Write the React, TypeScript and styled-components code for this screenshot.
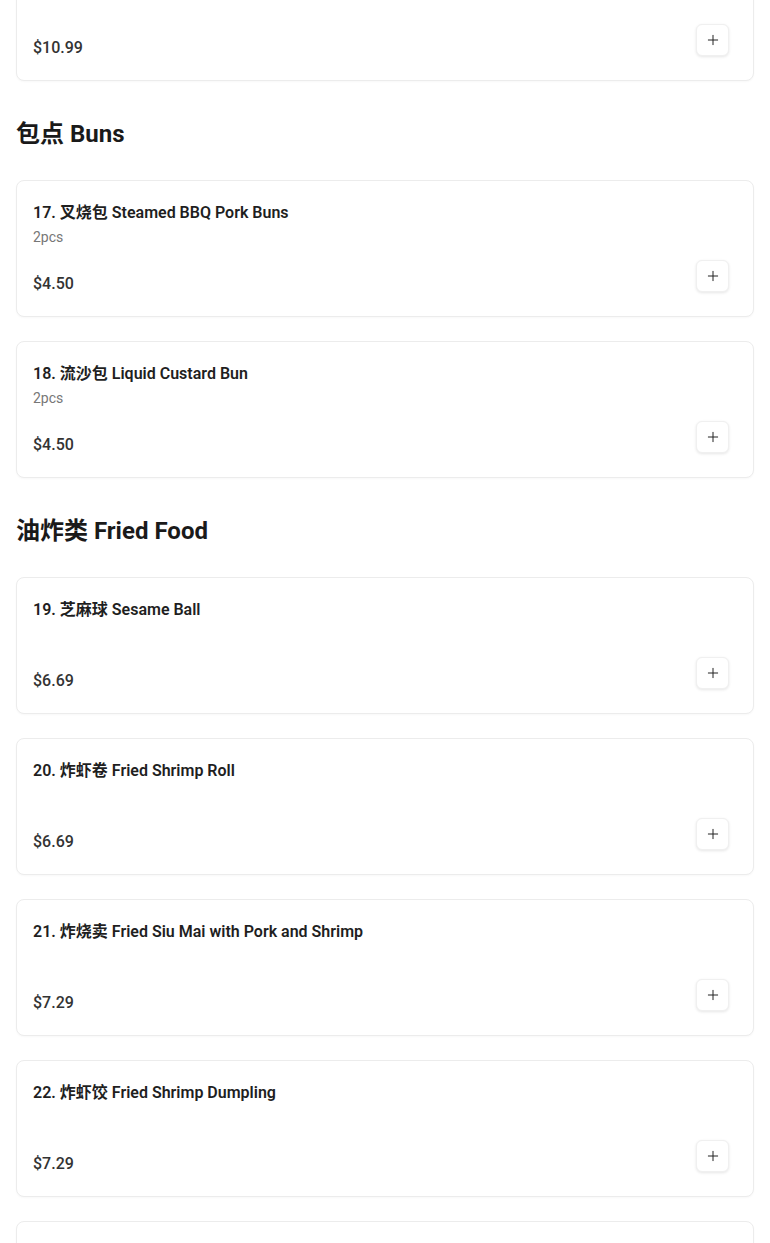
import React from 'react';
import styled, { createGlobalStyle } from 'styled-components';
import { Plus } from 'lucide-react';

const GlobalStyle = createGlobalStyle`
  body {
    margin: 0;
    background: #ffffff;
    font-family: Roboto, "Noto Sans CJK SC", sans-serif;
    color: #1a1a1a;
  }
`;

const Page = styled.div`
  padding: 0 16px 40px;
  margin-top: -56px;
  display: flex;
  flex-direction: column;
  gap: 37px;
`;

const Section = styled.section`
  display: flex;
  flex-direction: column;
`;

const SectionTitle = styled.h2`
  margin: 0 0 30px;
  font-size: 24px;
  line-height: 32px;
  font-weight: 700;
  color: #1a1a1a;
`;

const ItemList = styled.div`
  display: flex;
  flex-direction: column;
  gap: 24px;
`;

const Card = styled.div`
  border: 1px solid #ececec;
  border-radius: 8px;
  padding: 16px;
  background: #fff;
  box-shadow: 0 1px 2px rgba(0, 0, 0, 0.03);
`;

const ItemName = styled.div`
  margin-top: 4px;
  font-size: 16px;
  line-height: 24px;
  font-weight: 600;
  color: #1f1f1f;
`;

const ItemDesc = styled.div`
  margin-top: 2px;
  min-height: 20px;
  font-size: 14px;
  line-height: 20px;
  color: #777;
`;

const PriceRow = styled.div`
  margin-top: 13px;
  height: 40px;
  display: flex;
  align-items: flex-start;
  justify-content: space-between;
`;

const Price = styled.div`
  margin-top: 12px;
  font-size: 16px;
  line-height: 24px;
  font-weight: 500;
  color: #333;
`;

const AddButton = styled.button`
  width: 33px;
  height: 32px;
  margin-right: 8px;
  display: flex;
  align-items: center;
  justify-content: center;
  padding: 0;
  border: 1px solid #f0f0f0;
  border-radius: 6px;
  background: #fff;
  box-shadow: 0 1px 3px rgba(0, 0, 0, 0.1);
  color: #222;
  cursor: pointer;
`;

type Item = { name: string; desc?: string; price: string };

const sections: { title?: string; items: Item[] }[] = [
  {
    items: [{ name: '16. 蒸排骨 Steamed Spare Ribs', desc: '', price: '$10.99' }],
  },
  {
    title: '包点 Buns',
    items: [
      { name: '17. 叉烧包 Steamed BBQ Pork Buns', desc: '2pcs', price: '$4.50' },
      { name: '18. 流沙包 Liquid Custard Bun', desc: '2pcs', price: '$4.50' },
    ],
  },
  {
    title: '油炸类 Fried Food',
    items: [
      { name: '19. 芝麻球 Sesame Ball', price: '$6.69' },
      { name: '20. 炸虾卷 Fried Shrimp Roll', price: '$6.69' },
      { name: '21. 炸烧卖 Fried Siu Mai with Pork and Shrimp', price: '$7.29' },
      { name: '22. 炸虾饺 Fried Shrimp Dumpling', price: '$7.29' },
      { name: '23. 炸春卷 Fried Spring Roll', price: '$6.69' },
    ],
  },
];

const MenuCard: React.FC<{ item: Item }> = ({ item }) => (
  <Card>
    <ItemName>{item.name}</ItemName>
    <ItemDesc>{item.desc}</ItemDesc>
    <PriceRow>
      <Price>{item.price}</Price>
      <AddButton aria-label="Add">
        <Plus size={16} strokeWidth={1.5} />
      </AddButton>
    </PriceRow>
  </Card>
);

const App: React.FC = () => (
  <>
    <GlobalStyle />
    <Page>
      {sections.map((s, i) => (
        <Section key={i}>
          {s.title && <SectionTitle>{s.title}</SectionTitle>}
          <ItemList>
            {s.items.map((item) => (
              <MenuCard key={item.name} item={item} />
            ))}
          </ItemList>
        </Section>
      ))}
    </Page>
  </>
);

export default App;
